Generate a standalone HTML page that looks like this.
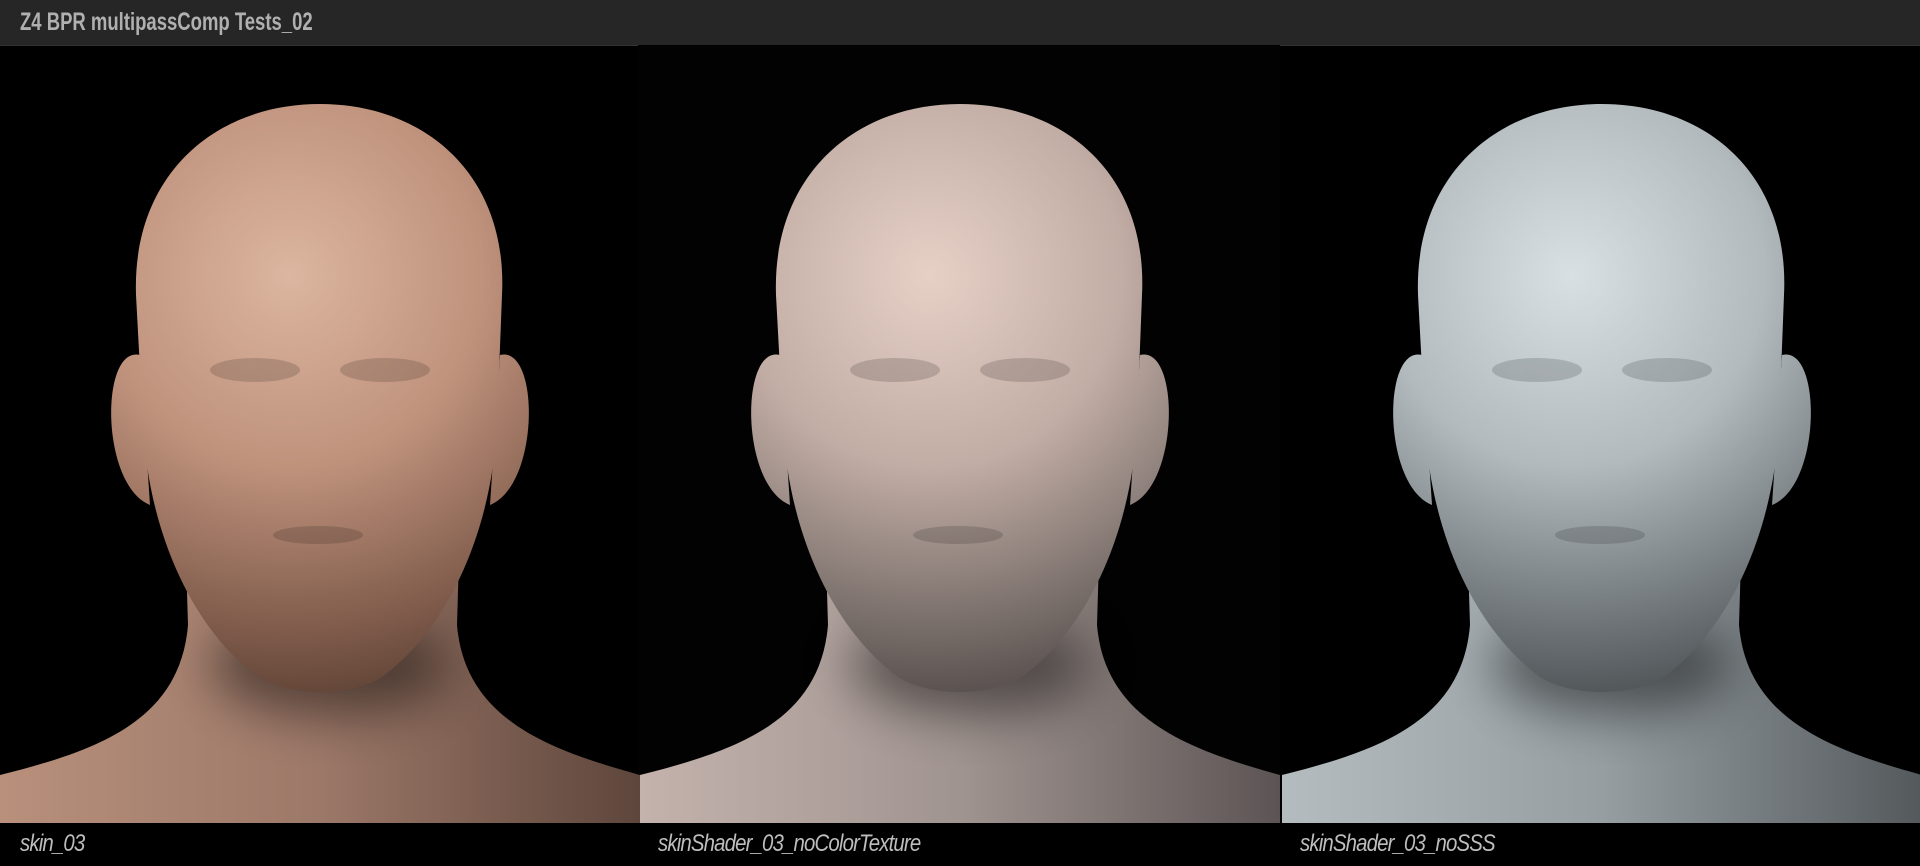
<!DOCTYPE html>
<html><head><meta charset="utf-8"><style>
html,body{margin:0;padding:0;background:#000;width:1920px;height:866px;overflow:hidden}
.bar{position:absolute;left:0;top:0;width:1920px;height:45px;background:#262626;border-bottom:1px solid #333}
.bar span{position:absolute;left:20px;top:8px;font:bold 25px "Liberation Sans",sans-serif;color:#b0b0b0;transform:scaleX(.74);transform-origin:left}
svg{position:absolute;left:0;top:45px}
.cap{position:absolute;top:830px;font:italic 24px "Liberation Sans",sans-serif;color:#bdbdbd;transform:scaleX(.85);transform-origin:left;letter-spacing:-1px}
</style></head><body>
<div class="bar"><span>Z4 BPR multipassComp Tests_02</span></div>
<svg width="1920" height="778" viewBox="0 0 1920 778">
<defs>
<filter id="bl" x="-50%" y="-50%" width="200%" height="200%"><feGaussianBlur stdDeviation="25"/></filter>
<radialGradient id="g1" gradientUnits="userSpaceOnUse" cx="290" cy="230" r="480"><stop offset="0" stop-color="#dcb6a0"/><stop offset="0.4" stop-color="#bf927c"/><stop offset="0.75" stop-color="#7e5a4a"/><stop offset="1" stop-color="#4a3428"/></radialGradient>
<radialGradient id="g2" gradientUnits="userSpaceOnUse" cx="290" cy="230" r="480"><stop offset="0" stop-color="#e6d0c6"/><stop offset="0.4" stop-color="#c2ada5"/><stop offset="0.75" stop-color="#746a66"/><stop offset="1" stop-color="#403a3a"/></radialGradient>
<radialGradient id="g3" gradientUnits="userSpaceOnUse" cx="290" cy="230" r="480"><stop offset="0" stop-color="#d8e0e4"/><stop offset="0.4" stop-color="#b2babe"/><stop offset="0.75" stop-color="#6a7074"/><stop offset="1" stop-color="#3a3e40"/></radialGradient>
<linearGradient id="b1" x1="0" x2="1"><stop offset="0" stop-color="#b8907c"/><stop offset=".5" stop-color="#9c7868"/><stop offset="1" stop-color="#5e463c"/></linearGradient>
<linearGradient id="b2" x1="0" x2="1"><stop offset="0" stop-color="#c4b2ac"/><stop offset=".5" stop-color="#a09490"/><stop offset="1" stop-color="#5c5454"/></linearGradient>
<linearGradient id="b3" x1="0" x2="1"><stop offset="0" stop-color="#b4bcc0"/><stop offset=".5" stop-color="#969ea2"/><stop offset="1" stop-color="#54595c"/></linearGradient>
<path id="body" d="M0 778 L0 730 C100 705 180 675 188 580 L185 480 L460 480 L457 580 C465 675 550 705 640 730 L640 778 Z"/>
<g id="head">
<path d="M140 310 C100 300 100 440 150 460 Z"/>
<path d="M500 310 C540 300 540 440 490 460 Z"/>
<path d="M136 250 C132 130 215 59 320 59 C425 59 508 130 502 250 L497 380 C492 480 452 580 382 632 C350 652 290 652 258 632 C188 580 148 480 143 380 Z"/>
</g>
</defs>
<rect x="638" y="0" width="642" height="778" fill="#020202"/>
<use href="#body" fill="url(#b1)"/>
<use href="#body" transform="translate(640 0)" fill="url(#b2)"/>
<use href="#body" transform="translate(1282 0)" fill="url(#b3)"/>
<g fill="#000" opacity=".45" filter="url(#bl)"><ellipse cx="330" cy="620" rx="120" ry="50"/><ellipse cx="970" cy="620" rx="120" ry="50"/><ellipse cx="1612" cy="620" rx="120" ry="50"/></g>
<g fill="url(#g1)"><use href="#head"/></g>
<g transform="translate(640 0)" fill="url(#g2)"><use href="#head"/></g>
<g transform="translate(1282 0)" fill="url(#g3)"><use href="#head"/></g>
<g fill="#000" opacity=".15">
<ellipse cx="255" cy="325" rx="45" ry="12"/><ellipse cx="385" cy="325" rx="45" ry="12"/><ellipse cx="318" cy="490" rx="45" ry="9"/>
<ellipse cx="895" cy="325" rx="45" ry="12"/><ellipse cx="1025" cy="325" rx="45" ry="12"/><ellipse cx="958" cy="490" rx="45" ry="9"/>
<ellipse cx="1537" cy="325" rx="45" ry="12"/><ellipse cx="1667" cy="325" rx="45" ry="12"/><ellipse cx="1600" cy="490" rx="45" ry="9"/>
</g>
</svg>
<div class="cap" style="left:20px">skin_03</div>
<div class="cap" style="left:658px">skinShader_03_noColorTexture</div>
<div class="cap" style="left:1300px">skinShader_03_noSSS</div>
</body></html>
